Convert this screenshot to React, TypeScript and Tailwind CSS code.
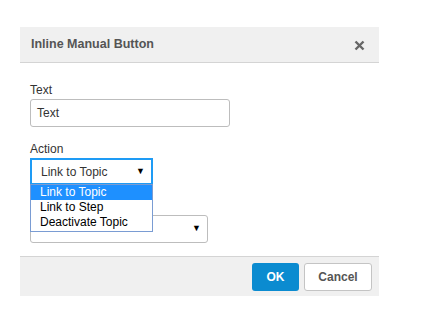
export default function App() {
  return (
    <div className="min-h-[313px] w-[422px] bg-white pt-[27px] pl-[20px] font-['Liberation_Sans',Arial,sans-serif]">
      <div className="w-[359px] bg-white">
        {/* header */}
        <div className="flex h-[36px] items-center justify-between border-b border-[#d4d4d4] bg-[#f0f0f0] pl-[11px] pr-[14px]">
          <span className="text-[12.5px] font-bold text-[#555]">Inline Manual Button</span>
          <svg width="11" height="11" viewBox="0 0 11 11" className="mt-[1px]">
            <path d="M1.5 1.5 L9.5 9.5 M9.5 1.5 L1.5 9.5" stroke="#666" strokeWidth="2.4" strokeLinecap="butt" />
          </svg>
        </div>

        {/* body */}
        <div className="relative px-[10px] pt-[19px] pb-[13px] text-[12px] text-[#333]">
          <label className="block h-[16px] leading-[16px]">Text</label>
          <div className="mt-[1px] flex h-[28px] w-[200px] items-center rounded-[3px] border border-[#bdbdbd] px-[6px]">
            Text
          </div>

          <label className="mt-[14px] block h-[16px] leading-[16px]">Action</label>
          <div className="relative mt-[1px] w-[123px]">
            <div className="flex h-[27px] items-center justify-between border-2 border-[#1e9bf5] pl-[9px] pr-[6px]">
              <span>Link to Topic</span>
              <span className="text-[9px] text-black">▼</span>
            </div>
            <div className="absolute left-0 top-[26px] z-10 w-[123px] border border-[#7a9cd3] bg-white">
              <div className="h-[15px] bg-[#1e90ff] pl-[9px] leading-[15px] text-white">Link to Topic</div>
              <div className="h-[15px] pl-[9px] leading-[15px] text-black">Link to Step</div>
              <div className="h-[16px] pl-[9px] leading-[15px] text-black">Deactivate Topic</div>
            </div>
          </div>

          {/* second select, its label sits under the open list */}
          <div className="mt-[30px] flex h-[28px] w-[178px] items-center justify-end rounded-[3px] border border-[#bdbdbd] pr-[6px]">
            <span className="text-[9px] text-black">▼</span>
          </div>
        </div>

        {/* footer */}
        <div className="flex h-[40px] items-center justify-end gap-[5px] border-t border-[#d4d4d4] bg-[#f0f0f0] pr-[7px]">
          <button className="h-[28px] w-[47px] rounded-[3px] bg-[#0b8bd0] text-[12px] font-bold text-white">OK</button>
          <button className="h-[28px] w-[68px] rounded-[3px] border border-[#c4c4c4] bg-white text-[12px] font-bold text-[#555]">
            Cancel
          </button>
        </div>
      </div>
    </div>
  );
}
